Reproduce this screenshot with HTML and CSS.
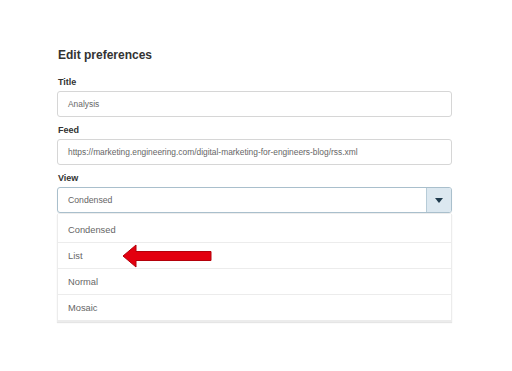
FILE: index.html
```html
<!DOCTYPE html>
<html>
<head>
    <meta charset="UTF-8">
    <title>Edit preferences</title>
    <link rel="stylesheet" href="styles.css">
</head>
<body>
    <div class="panel">
        <h1>Edit preferences</h1>

        <div class="field">
            <label>Title</label>
            <div class="input">Analysis</div>
        </div>

        <div class="field">
            <label>Feed</label>
            <div class="input">https://marketing.engineering.com/digital-marketing-for-engineers-blog/rss.xml</div>
        </div>

        <div class="field">
            <label>View</label>
            <div class="select">
                <span class="select-value">Condensed</span>
                <span class="select-btn"><span class="caret"></span></span>
            </div>
            <ul class="options">
                <li>Condensed</li>
                <li>List</li>
                <li>Normal</li>
                <li>Mosaic</li>
                <svg class="pointer" width="92" height="24" viewBox="0 0 92 24">
                    <polygon points="1,12 14,1 14,7.5 89,7.5 89,16.5 14,16.5 14,23" fill="#e3000f" stroke="#b4000a" stroke-width="1"/>
                </svg>
            </ul>
        </div>
    </div>
</body>
</html>
```

FILE: styles.css
```css
body {
    margin: 0;
    background: #fff;
    font-family: "Liberation Sans", Arial, sans-serif;
    color: #555;
}
.panel {
    width: 395px;
    padding: 47px 0 0 57px;
}
h1 {
    margin: 0 0 13px 1px;
    font-size: 12px;
    line-height: 16px;
    color: #333;
}
.field {
    margin-bottom: 7px;
}
.field label {
    display: block;
    margin: 0 0 3px 1px;
    font-size: 9px;
    line-height: 12px;
    font-weight: bold;
    color: #333;
}
.input {
    height: 24px;
    line-height: 24px;
    padding: 0 10px;
    border: 1px solid #d6d6d6;
    border-radius: 3px;
    font-size: 8.4px;
    color: #666;
    white-space: nowrap;
}
.select {
    display: flex;
    height: 24px;
    border: 1px solid #a9bfcc;
    border-radius: 3px;
    box-shadow: 0 1px 1px rgba(0,0,0,0.08);
    overflow: hidden;
}
.select-value {
    flex: 1;
    line-height: 24px;
    padding: 0 10px;
    font-size: 8.7px;
    color: #666;
}
.select-btn {
    width: 24px;
    display: flex;
    align-items: center;
    justify-content: center;
    background: #dce8f0;
    border-left: 1px solid #b7ccd8;
}
.caret {
    width: 0;
    height: 0;
    border-left: 4px solid transparent;
    border-right: 4px solid transparent;
    border-top: 5px solid #1f3b4d;
}
.options {
    position: relative;
    list-style: none;
    margin: 1px 0 0;
    padding: 3px 0 0;
    border: 1px solid #ececec;
    border-top: none;
    box-shadow: 0 1px 1px rgba(0,0,0,0.1);
    background: #fff;
}
.options li {
    height: 25px;
    line-height: 26px;
    padding: 0 10px;
    font-size: 9.3px;
    color: #666;
    border-bottom: 1px solid #ececec;
}
.options li:last-child {
    border-bottom: none;
}
.pointer {
    position: absolute;
    left: 64px;
    top: 30px;
}
```
